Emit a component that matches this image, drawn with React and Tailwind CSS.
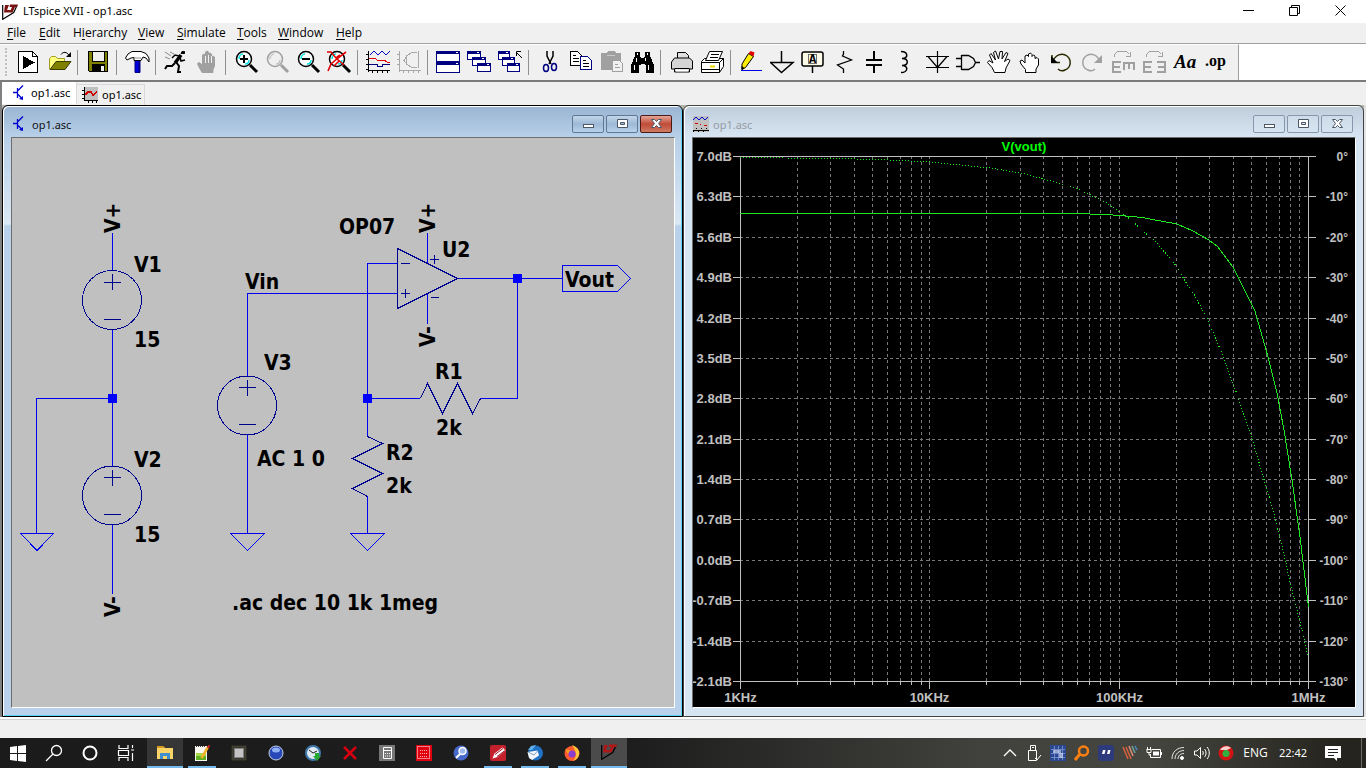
import { Fragment } from "react";

const menus = [
  { label: "File", className: "w-[32px]" },
  { label: "Edit", className: "w-[34px]" },
  { label: "Hierarchy", key: 1, className: "w-[65px]" },
  { label: "View", className: "w-[39px]" },
  { label: "Simulate", className: "w-[60px]" },
  { label: "Tools", className: "w-[41px]" },
  { label: "Window", className: "w-[58px]" },
  { label: "Help", className: "w-[34px]" },
];

/* ---------- toolbar icons, all on a 25 x 24 canvas ---------- */

function Lens({ color = "#000", glass = "#fff", shine = "#00e0e8", children }) {
  return (
    <g fill="none">
      <path d="M16 15l7 7" stroke={color} strokeWidth="3" />
      <circle cx="10" cy="9" r="7.5" fill={glass} stroke={color} strokeWidth="1.5" />
      <path d="M5 9c0-3 2-5 4-5M11 14c2 0 4-1 4-4" stroke={shine} strokeWidth="1.5" />
      {children}
    </g>
  );
}

function MiniWindow({ x, y, w = 14, h = 9 }) {
  return (
    <g shapeRendering="crispEdges">
      <rect x={x + 0.5} y={y + 0.5} width={w - 1} height={h - 1} fill="#fff" stroke="#000080" />
      <rect x={x} y={y} width={w} height="3" fill="#000080" />
      <rect x={x + w - 4} y={y + 1} width="2" height="1" fill="#fff" />
    </g>
  );
}

function OpenHand({ fill, stroke }) {
  return (
    <path
      d="M7 22.500L3.500 16 2.500 13.500 4 12.500 7.500 15V5l1.500-1 1.500 1v-3l1.500-1 1.500 1v2l1.500-1 1.500 1v3l1.500-1 1.500 1v9l-1.500 3.500v3z"
      fill={fill}
      stroke={stroke}
    />
  );
}

const icons = {
  Run: (
    <g shapeRendering="crispEdges">
      <path d="M2.500 1.500h14l5 5v16h-19z" fill="#fff" stroke="#000" />
      <path d="M16.500 1.500v5h5" fill="none" stroke="#000" />
      <path d="M7 6v13l12-6.500z" />
    </g>
  ),
  Open: (
    <g>
      <path d="M2.500 19V8.500l2-2h4l2 2h7v4" fill="#ffff80" stroke="#a09a20" />
      <path d="M3 19.500l6-8h15l-6 8z" fill="#808000" stroke="#3c3c00" />
      <path d="M14 4.500c2-3 6-3 8 1" fill="none" stroke="#000" />
      <path d="M24 2v5h-5z" />
    </g>
  ),
  Save: (
    <g shapeRendering="crispEdges">
      <path d="M2.500 1.500h19v20h-18l-1-1z" fill="#808000" stroke="#000" />
      <rect x="6.500" y="1.500" width="12" height="10" fill="#f0f0f0" stroke="#000" />
      <rect x="6" y="14" width="13" height="8" />
      <rect x="15" y="16" width="3" height="5" fill="#f0f0f0" />
    </g>
  ),
  "Control Panel": (
    <g>
      <path d="M10 10h5v12.500h-5z" fill="#0000e0" stroke="#000080" />
      <path d="M14 11v11" stroke="#000060" />
      <path d="M.5 8L3 4l4-2.500h9l5 2 3 4.500v4l-3-4-3-1-2 3.500H9V7.500L6 8l-4 2z" fill="#fff" stroke="#000" />
      <path d="M9 8h7" stroke="#909090" />
    </g>
  ),
  Simulate: (
    <g fill="none" stroke="#000">
      <path d="M18 1.500h2.500v2H17z" fill="#000" />
      <path d="M17 5l-6 8" strokeWidth="3.500" />
      <path d="M15 6l-4-1-3 3M16 7l1 4 4-1" strokeWidth="1.500" />
      <path d="M12 12l3 4-1 6h3M11 13l-3 3H3l-2 3" strokeWidth="2" />
      <path d="M1 2l6 4M1 7l5 2M6 2l4 2" stroke="#8a8a8a" />
    </g>
  ),
  Halt: (
    <g>
      <OpenHand fill="#a0a0a0" stroke="#a0a0a0" />
      <path d="M10.500 6v7M13.500 5v8M16.500 6v7" stroke="#f0f0f0" />
    </g>
  ),
  "Zoom In": (
    <Lens>
      <path d="M10 5v8M6 9h8" stroke="#000" strokeWidth="2" />
    </Lens>
  ),
  Pan: <Lens color="#a0a0a0" glass="#f0f0f0" shine="#c4c4c4" />,
  "Zoom Out": (
    <Lens>
      <path d="M6 9h8" stroke="#000" strokeWidth="2" />
    </Lens>
  ),
  "Zoom Fit": (
    <Lens>
      <path d="M0 2h4l5 6 8 7M19 2l-8 6-7 6-3 7M9 8l4-3M12 11l-5 5" stroke="#e00000" strokeWidth="1.600" />
    </Lens>
  ),
  Autorange: (
    <g fill="none" shapeRendering="crispEdges">
      <path d="M2.500 1v21M2 20.500h22" stroke="#000" />
      <path d="M0 4.500h2M0 9.500h2M0 14.500h2M0 19.500h2M6.500 21v2M11.500 21v2M16.500 21v2M21.500 21v2" stroke="#000" />
      <path d="M4 5l4-4 4 4 4-4 4 4 4-4" stroke="#0000c0" />
      <path d="M3 9l5-1 5 3 5-1 3 2h3" stroke="#e00000" />
      <path d="M3 14.500h8v2h5v-2h8" stroke="#000080" />
    </g>
  ),
  Smith: (
    <g fill="none" stroke="#a8a8a8" shapeRendering="crispEdges">
      <path d="M2.500 1v21M2 20.500h22M0 4.500h2M0 9.500h2M0 14.500h2M6.500 21v2M11.500 21v2M16.500 21v2M21.500 21v2" />
      <path d="M21.500 1v17M20 2.500h-5l-5 3-3 5 3 4 5 3h5" />
      <path d="M9.500 6v8" />
    </g>
  ),
  "Tile Windows": (
    <g shapeRendering="crispEdges">
      <MiniWindow x={0} y={1} w={24} h={11} />
      <MiniWindow x={0} y={12} w={24} h={11} />
    </g>
  ),
  Cascade: (
    <g>
      <MiniWindow x={0} y={1} />
      <MiniWindow x={5} y={7} />
      <MiniWindow x={10} y={13} />
    </g>
  ),
  "Close All": (
    <g>
      <MiniWindow x={0} y={1} w={12} />
      <MiniWindow x={4} y={7} w={13} />
      <MiniWindow x={9} y={13} w={13} />
      <path d="M24 8l-6-6M18.500 6V1.500H23" fill="none" stroke="#000" />
    </g>
  ),
  Cut: (
    <g fill="none">
      <path d="M10 1v5l4 8M16 1v5l-4 8" stroke="#000" strokeWidth="1.500" />
      <ellipse cx="9" cy="18" rx="2.500" ry="3.500" stroke="#000080" strokeWidth="1.500" />
      <ellipse cx="17" cy="17" rx="2.500" ry="3.500" stroke="#000080" strokeWidth="1.500" />
    </g>
  ),
  Copy: (
    <g shapeRendering="crispEdges">
      <path d="M2.500 1.500h7l4 4v10h-11z" fill="#fff" stroke="#000" />
      <path d="M5 5.500h3M5 8.500h6M5 11.500h6" stroke="#000" />
      <path d="M12.500 6.500h7l4 4v9h-11z" fill="#fff" stroke="#000080" />
      <path d="M15 10.500h3M15 13.500h6M15 16.500h6" stroke="#000" />
    </g>
  ),
  Paste: (
    <g shapeRendering="crispEdges">
      <path d="M2 3h5l2-2h6l2 2h5v17H2z" fill="#a0a0a0" />
      <path d="M8 5.500h8" stroke="#c8c8c8" />
      <path d="M13.500 10.500h7l3 3v8h-10z" fill="#f0f0f0" stroke="#a0a0a0" />
      <path d="M16 14.500h3M16 17.500h5" stroke="#a0a0a0" />
    </g>
  ),
  Find: (
    <g shapeRendering="crispEdges">
      <path d="M5 2h5v4l1 2h3l1-2V2h5v4l4 9v8h-8v-8h-1v-1h-4v1H9v8H1v-8l4-9z" />
      <path d="M7.500 3v2M17.500 3v2M6.500 8v4M15.500 8v3M4.500 15v5M18.500 15v5" stroke="#fff" />
    </g>
  ),
  Setup: (
    <g>
      <path d="M8.500 9V2.500h8l3 3V9" fill="#e0e0e0" stroke="#000" />
      <path d="M2.500 12l3-4h15l3 3v8h-3v3h-15v-3h-3z" fill="#d4d4d4" stroke="#000" />
      <path d="M5.500 18.500h15" stroke="#000" />
      <path d="M7 19.500h12v2H7z" fill="#fff" />
    </g>
  ),
  Print: (
    <g>
      <path d="M1.500 11.500l3-3h19v8l-4 6h-18z" fill="#fff" stroke="#000" />
      <path d="M5.500 10.500l4-9h13l-4 9z" fill="#fff" stroke="#000" />
      <path d="M11 4.500h8M10 7.500h8M1.500 12.500h18l4-4M19.500 12.500v10M1.500 19.500h18" fill="none" stroke="#000" />
      <path d="M10 16.500h5" stroke="#e8d800" strokeWidth="2" />
    </g>
  ),
  Wire: (
    <g>
      <path d="M2 20.500h21" stroke="#0000e0" shapeRendering="crispEdges" />
      <path d="M9.500 3.500l5 3-8 11-3.500 2V14z" fill="#ffee00" stroke="#000" />
      <path d="M9.500 3.500l2-2.500 4 1.500-1 4z" fill="#e00000" />
      <path d="M2.500 20v-4l3 2z" />
    </g>
  ),
  Ground: <path d="M11.500 1v11M0 12.500h23L11.500 22.500 .5 12.500" fill="none" stroke="#000" strokeWidth="1.500" />,
  "Label Net": (
    <g fill="none" stroke="#000">
      <rect x="1" y="2" width="21" height="14" rx="2" fill="#fbfbe8" strokeWidth="1.500" />
      <path d="M11.500 16v7" strokeWidth="1.500" />
      <rect x="7.500" y="4.500" width="8" height="9" stroke="#707070" />
      <text x="8" y="13" fontSize="12" fontWeight="700" fill="#000" stroke="none" fontFamily="Liberation Mono, monospace">A</text>
    </g>
  ),
  Resistor: <path d="M11.500 1v3l-1 2 9 4-14 5 6 4v4" fill="none" stroke="#000" strokeWidth="1.300" />,
  Capacitor: (
    <g shapeRendering="crispEdges">
      <path d="M3 9h16v2H3zM3 14h16v2H3zM10 1h2v8h-2zM10 16h2v7h-2z" />
    </g>
  ),
  Inductor: <path d="M7 1.500c7 0 8 7 1 7 7 0 7 7 0 7 7 0 6 7-1 7" fill="none" stroke="#000" strokeWidth="1.500" />,
  Diode: <path d="M12.500 1v22M1 6.500h23M1 17.500h23M3 6.500l9.500 11 9.500-11" fill="none" stroke="#000" strokeWidth="1.200" />,
  Component: <path d="M0 8.500h6M0 16.500h6M5.500 5v15M5.500 5.500h7l5 3 2 4-2 4-5 3h-7M19 12.500h5" fill="#ececec" stroke="#000" strokeWidth="1.300" />,
  Move: (
    <path d="M7.500 22.500L5 17.500.5 12.500 2 10.500l4 2.500L2.500 5 4 3.500 8.500 10 6.500 2.500 8.500 1l3 8L13 1.500h2.500L15 9l4-6.500 2 1-3.500 8 3.500-2.500 2 1.500-4 7.500-1 4.500z" fill="#fff" stroke="#000" />
  ),
  Drag: (
    <path d="M7.500 22.500v-3L3 14 2 11l2-1 3 3V6l2-1 1.500 1.500V4l2-1 1.500 1.500v2L15.500 5l1.500 1v2.500l2-1 1.500 1.500v6l-2.500 4v3.500z" fill="#fff" stroke="#000" />
  ),
  Undo: (
    <g fill="none" stroke="#2a2a00" strokeWidth="1.500">
      <path d="M3 5v7.500h8M3.500 12C6 5 13 2 18 6s4 12-2 14c-2 1-5 1-7-1" />
      <path d="M2 6v7h7z" fill="#000" stroke="none" />
    </g>
  ),
  Redo: (
    <g fill="none" stroke="#a0a0a0" strokeWidth="1.500">
      <path d="M20 12C18 5 11 2 6 6S2 18 8 20c2 1 5 1 7-1" />
      <path d="M22 5v8h-8z" fill="#a0a0a0" stroke="none" />
    </g>
  ),
  Rotate: (
    <g fill="none" stroke="#a0a0a0" shapeRendering="crispEdges">
      <path d="M3.500 7V4.500l3-3h9l3 3M19.500 2v4.500H15" />
      <path d="M2 11v12M2 12h8M2 17h7M2 22h8M12 13h12M13 13v7M18 13v6M23 13v7" strokeWidth="2" />
    </g>
  ),
  Mirror: (
    <g fill="none" stroke="#a0a0a0" shapeRendering="crispEdges">
      <path d="M4.500 7V4.500l3-3h9l3 3M20.500 2v4.500H16" />
      <path d="M2 11v12M2 12h8M2 17h7M2 22h8M23 11v12M23 12h-8M23 17h-7M23 22h-8" strokeWidth="2" />
    </g>
  ),
  Text: (
    <text x="1" y="18" fontSize="19" fontWeight="700" fontStyle="italic" fontFamily="Liberation Serif, serif">Aa</text>
  ),
  "SPICE Directive": (
    <text x="1" y="16" fontSize="16" fontWeight="700" fontFamily="Liberation Serif, serif">.op</text>
  ),
};

const toolbar = [
  ["Run", "Open"],
  ["Save"],
  ["Control Panel"],
  ["Simulate", "Halt"],
  ["Zoom In", "Pan", "Zoom Out", "Zoom Fit"],
  ["Autorange", "Smith"],
  ["Tile Windows", "Cascade", "Close All"],
  ["Cut", "Copy", "Paste", "Find"],
  ["Setup", "Print"],
  ["Wire", "Ground", "Label Net", "Resistor", "Capacitor", "Inductor", "Diode", "Component", "Move", "Drag", "Undo", "Redo", "Rotate", "Mirror", "Text", "SPICE Directive"],
];

function LtLogo({ dark }) {
  return (
    <svg viewBox="0 0 16 16" className="h-4 w-4">
      <path d="M.700 1v14.300l11-6.800L15 1.500" fill="none" stroke="#000" strokeWidth="1.200" />
      <path d="M3 1h4L5 6h3.500l-1 2.500H2zM8 .5h8l-1 2.500h-2l-2.500 5.500H7.500L10 3H7.500z" fill={dark ? "#b01818" : "#7a1010"} />
    </svg>
  );
}

function TransistorIcon() {
  return (
    <svg viewBox="0 0 16 16" className="h-4 w-4">
      <path d="M1 7.500h4M5.500 3v10M6 5.500l5-5M6 9.500l4 4" fill="none" stroke="#0000d0" strokeWidth="1.300" />
      <path d="M11 15v-4l-4 3z" fill="#0000d0" />
    </svg>
  );
}

function PlotIcon() {
  return (
    <svg viewBox="0 0 16 16" className="h-4 w-4" shapeRendering="crispEdges">
      <rect x="2" width="14" height="14" fill="#c0c0c0" />
      <path d="M2.500 0v14M2 13.500h14M0 3.500h2M0 7.500h2M0 11.500h2M6.500 14v2M10.500 14v2M14.500 14v2" stroke="#000" fill="none" />
      <path d="M3 8l3-3h3l2 3 4-3" stroke="#d00000" strokeWidth="1.500" fill="none" />
    </svg>
  );
}

function WaveIcon() {
  return (
    <svg viewBox="0 0 16 16" className="h-4 w-4" shapeRendering="crispEdges">
      <rect width="16" height="16" fill="#c0c0c0" />
      <path d="M0 4l3-3 3 3 3-3 3 3 3-3" stroke="#0000d0" fill="none" />
      <path d="M2 7.500h3M7 8.500h1M11 9.500h3" stroke="#d00000" />
      <path d="M0 14.500h16M0 15.500h1M5 15.500h1M10 15.500h1M3 12.500h1M8 12.500h1M13 12.500h1" stroke="#000" />
    </svg>
  );
}

/* ---------- schematic ---------- */

const labels = [
  ["V1", 134, 272], ["15", 134, 347], ["V2", 134, 467], ["15", 134, 542],
  ["V3", 264, 370], ["Vin", 245, 289], ["AC 1 0", 257, 466],
  ["OP07", 339, 234], ["U2", 442, 257], ["R1", 435, 379], ["2k", 436, 435],
  ["R2", 386, 460], ["2k", 386, 493], ["Vout", 565, 287], [".ac dec 10 1k 1meg", 232, 610],
];

const railLabels = [
  ["V+", 120, 233], ["V-", 120, 617], ["V+", 435, 233], ["V-", 435, 347],
];

function Source({ x, y }) {
  return (
    <g>
      <circle cx={x} cy={y} r="29.5" />
      <path d={`M${x - 8} ${y - 18}h17M${x + 0.5} ${y - 26}v16M${x - 8} ${y + 19}h17`} />
    </g>
  );
}

function Schematic() {
  return (
    <svg viewBox="12 138 662 569" preserveAspectRatio="xMinYMin meet" className="h-full w-full bg-[#c0c0c0]">
      <g fill="none" stroke="#0000f0" shapeRendering="crispEdges">
        <path d="M112.500 233v37M112.500 329v137M112.500 525v69M112 398.500H36.500V533" />
        <path d="M247.500 376v-82.500H397M247.500 435v98" />
        <path d="M397 263.500H367.500V436M367 398.500h53M480 398.500h37.500V278.500M457 278.500h105M367.500 496v37" />
        <path d="M427.500 233v30M427.500 293v31" />
        <path d="M562.500 265.500h55l13 13-13 13h-55z" />
        <path d="M20.500 533.500h33l-16.500 17zM230.500 533.500h34l-17 17zM350.500 533.500h34l-17 17z" />
      </g>
      <g fill="none" stroke="#000090" shapeRendering="crispEdges">
        <Source x={112} y={300} />
        <Source x={112} y={495.5} />
        <Source x={247} y={405.5} />
        <path d="M397.500 248.500v60l60-30z" />
        <path d="M401 263.500h9M401 293.500h9M405.500 289v9M430 259.500h9M434.500 255v9M431 297.500h8" />
        <path d="M420.500 398.500l7-15 15 30 15-30 15 30 8-15" />
        <path d="M367.500 436.500l15 7-30 15 30 15-30 15 15 8" />
      </g>
      <g fill="#0000ff">
        <rect x="108" y="394" width="9" height="9" />
        <rect x="363" y="394" width="9" height="9" />
        <rect x="513" y="274" width="9" height="9" />
      </g>
      <g fontFamily="'DejaVu Sans Condensed', 'Noto Sans', sans-serif" fontWeight="700" fontSize="21">
        {labels.map(([text, x, y]) => (
          <text key={`${x}-${y}`} x={x} y={y}>{text}</text>
        ))}
        {railLabels.map(([text, x, y]) => (
          <text key={`${x}-${y}`} transform={`translate(${x} ${y}) rotate(-90)`}>{text}</text>
        ))}
      </g>
    </svg>
  );
}

/* ---------- bode plot ---------- */

const gains = ["7.0dB", "6.3dB", "5.6dB", "4.9dB", "4.2dB", "3.5dB", "2.8dB", "2.1dB", "1.4dB", "0.7dB", "0.0dB", "-0.7dB", "-1.4dB", "-2.1dB"];
const decades = ["1KHz", "10KHz", "100KHz", "1MHz"];
const LEFT = 740;
const RIGHT = 1308;
const TOP = 156;
const BOTTOM = 681;

const rowY = (i) => Math.round(TOP + ((BOTTOM - TOP) * i) / 13) + 0.5;
const freqX = (decade, n) => Math.round(LEFT + ((RIGHT - LEFT) * (decade + Math.log10(n))) / 3) + 0.5;

const minorX = [0, 1, 2].flatMap((d) => [2, 3, 4, 5, 6, 7, 8, 9].map((n) => freqX(d, n)));

function Plot() {
  return (
    <svg viewBox="693 138 662 569" preserveAspectRatio="xMinYMin meet" className="h-full w-full bg-black">
      <g stroke="#787878" strokeDasharray="3 3" shapeRendering="crispEdges">
        {gains.slice(1, -1).map((g, i) => (
          <line key={g} x1={LEFT} x2={RIGHT} y1={rowY(i + 1)} y2={rowY(i + 1)} />
        ))}
        {[...minorX, freqX(1, 1), freqX(2, 1)].map((x) => (
          <line key={x} x1={x} x2={x} y1={TOP} y2={BOTTOM} />
        ))}
      </g>
      <g stroke="#c0c0c0" fill="none" shapeRendering="crispEdges">
        <rect x={LEFT + 0.5} y={TOP + 0.5} width={RIGHT - LEFT} height={BOTTOM - TOP} />
        {gains.map((g, i) => (
          <path key={g} d={`M${LEFT - 7} ${rowY(i)}h7M${RIGHT} ${rowY(i)}h8`} />
        ))}
        {minorX.map((x) => (
          <path key={x} d={`M${x} ${BOTTOM}v4`} />
        ))}
        {decades.map((d, i) => (
          <path key={d} d={`M${freqX(i, 1)} ${BOTTOM}v8`} />
        ))}
      </g>
      <g fill="none" stroke="#20e820" shapeRendering="crispEdges">
        <path d="M740 213.500H1075L1105 214.500 1120 215.500 1142 217.500 1158 220.500 1177 224 1193 231 1209 240 1218 247 1233 267 1255 311 1268 357 1277 393 1284 430 1292 480 1300 537 1308.500 607" />
        <path
          strokeDasharray="1 2"
          d="M740 157.500L830 158.500 880 159.500 930 162 990 168 1025 174 1062 184 1080 190 1105 202 1118 211 1130 219 1143 231 1157 243 1177 267 1185 281 1195 296 1208 320 1223 356 1238 397 1252 438 1260 466 1273 510 1283 550 1291 586 1302 630 1308 656"
        />
      </g>
      <g fill="#c0c0c0" fontFamily="'Liberation Sans', Arial, sans-serif" fontWeight="700" fontSize="13">
        <text x="1024" y="151" textAnchor="middle" fill="#00ff00">V(vout)</text>
        {gains.map((g, i) => (
          <text key={g} x={LEFT - 8} y={rowY(i) + 4} textAnchor="end">{g}</text>
        ))}
        {gains.map((g, i) => (
          <text key={g} x="1348" y={rowY(i) + 4} fontSize="12" textAnchor="end">{i === 0 ? "0°" : `-${i * 10}°`}</text>
        ))}
        {decades.map((d, i) => (
          <text key={d} x={freqX(i, 1)} y="702" textAnchor="middle">{d}</text>
        ))}
      </g>
    </svg>
  );
}

/* ---------- MDI child window ---------- */

function ChildButton({ name, active, children }) {
  const isClose = name === "Close";
  const look = !active
    ? "border-[#8797ad] bg-linear-to-b from-[#cfdbe8] to-[#d6e3f0]"
    : isClose
      ? "border-[#4a1a18] bg-linear-to-b from-[#e3a498] via-[#c04a38] to-[#cf7a62]"
      : "border-[#5f7896] bg-linear-to-b from-[#c3d5e8] via-[#9db9d7] to-[#b9d0e8]";
  return (
    <button aria-label={name} className={`flex h-[18px] w-8 items-center justify-center rounded-[2px] border ${look}`}>
      <svg viewBox="0 0 14 12" className="h-3 w-3.5">
        <g fill="#fff" stroke="#4c5768">{children}</g>
      </svg>
    </button>
  );
}

function ChildWindow({ title, icon, active, children }) {
  return (
    <section
      className={
        active
          ? "flex flex-col rounded-t-md border border-black bg-[linear-gradient(to_bottom,#99b4d2_0px,#b7cfe8_30px,#dbe8f5_118px,#b9d1ea_120px)] pr-[7px] pb-2 pl-2 shadow-[inset_1px_1px_0_#fff,inset_-1px_-1px_0_#5cd3f5]"
          : "flex flex-col rounded-t-md border border-[#444] bg-[linear-gradient(to_bottom,#bfcddb_0px,#d7e4f2_30px)] pr-[7px] pb-2 pl-2 shadow-[inset_1px_1px_0_#fff]"
      }
    >
      <header className="flex h-[31px] items-center gap-1 pt-[5px] pl-px">
        {icon}
        <h2 className={active ? "flex-1 pt-0.5 text-[11px] text-[#111]" : "flex-1 pt-0.5 text-[11px] text-[#959ca4]"}>{title}</h2>
        <div className="flex gap-0.5 pr-[3px]">
          <ChildButton name="Minimize" active={active}>
            <rect x="2.500" y="6.500" width="10" height="3" />
          </ChildButton>
          <ChildButton name="Maximize" active={active}>
            <path fillRule="evenodd" d="M2.500 1.500h10v8h-10zM5.500 4.500h4v2h-4z" />
          </ChildButton>
          <ChildButton name="Close" active={active}>
            <path d="M2.500 1.500h3l2 2 2-2h3l-3 4 3 4h-3l-2-2-2 2h-3l3-4z" />
          </ChildButton>
        </div>
      </header>
      <div className="min-h-0 flex-1 border border-t-[#6e6e6e] border-r-white border-b-white border-l-[#6e6e6e]">{children}</div>
    </section>
  );
}

/* ---------- taskbar ---------- */

const launchers = [
  { name: "Start", art: <path d="M0 2l7-1v7H0zM8 1l8-1v8H8zM0 9h7v7l-7-1zM8 9h8v8l-8-1z" fill="#fff" /> },
  { name: "Search", art: <g fill="none" stroke="#fff" strokeWidth="1.300"><circle cx="10.500" cy="5.500" r="5" /><path d="M7 9l-7 7" /></g> },
  { name: "Cortana", art: <circle cx="8" cy="8" r="6.500" fill="none" stroke="#fff" strokeWidth="2" /> },
  { name: "Task View", art: <path d="M1 0v3.500h9V0M1 16v-3.500h9V16M.5 5.500h10v5H.5zM14.500 0v3M14.500 8v8M13 5h3" fill="none" stroke="#fff" strokeWidth="1.200" /> },
];

const apps = [
  { name: "File Explorer", state: "active", art: <g><path d="M0 2h6l2 2h8v11H0z" fill="#f9d568" /><path d="M0 2h6l2 2H0z" fill="#d79a1c" /><path d="M3 15V9h10v6h-3v-3H6v3z" fill="#3f8fd0" /></g> },
  { name: "Notepad++", state: "running", art: <g><rect x="1" y="1" width="12" height="15" fill="#f8f8f0" /><path d="M2 8h10v7H2z" fill="#a4d84a" /><path d="M2 11h10v4H2z" fill="#5fb020" /><path d="M2 1.500h10" stroke="#444" strokeDasharray="1 1" /><path d="M14 2L7.500 13" stroke="#f0b030" strokeWidth="2.500" /><path d="M15.500 0l-1.500 3" stroke="#c02020" strokeWidth="2" /></g> },
  { name: "Chip", art: <g><rect x="1" y="1" width="14" height="14" fill="#3a3934" stroke="#5a5330" strokeWidth=".5" /><rect x="3" y="3" width="10" height="10" fill="#808080" /><rect x="4" y="4" width="8" height="8" fill="#c4c4c4" /></g> },
  { name: "Orb", art: <g><circle cx="8" cy="8" r="7" fill="#2848b8" stroke="#c8d4e8" /><ellipse cx="8" cy="5" rx="4" ry="2.500" fill="#90b0f4" /></g> },
  { name: "Backup", art: <g><circle cx="8" cy="8" r="7" fill="#dfe9f2" stroke="#3f79ac" strokeWidth="2" /><path d="M4 5l4 3 4-2" stroke="#222" fill="none" /><path d="M10 8h4v3h2l-4 5-4-5h2z" fill="#25a832" /></g> },
  { name: "Closer", art: <path d="M2 2l12 12M14 2L2 14" stroke="#d80010" strokeWidth="2.500" /> },
  { name: "Calculator", art: <g><rect width="16" height="16" fill="#777" /><path d="M4.500 2.500h8v11h-8zM5 5.500h7" fill="none" stroke="#fff" /><path d="M6 8.500h6M6 11h6" stroke="#fff" strokeDasharray="1 1" /></g> },
  { name: "Red grid", art: <g><rect width="16" height="16" fill="#e00010" /><rect x="1.500" y="1.500" width="12" height="12" fill="none" stroke="#fff" strokeDasharray="1 1" /><path d="M4 5.500h8M4 8.500h8M4 11.500h8" stroke="#f8b0b0" strokeDasharray="1 1" /></g> },
  { name: "Finder", art: <g><circle cx="8" cy="8" r="7.500" fill="#4668c8" /><circle cx="9.500" cy="6" r="3.500" fill="#9db8f0" stroke="#fff" strokeWidth="1.500" /><path d="M7 9l-4 4" stroke="#fff" strokeWidth="2" /></g> },
  { name: "Editor", state: "running", art: <g><rect width="16" height="16" rx="2" fill="#c4202c" /><path d="M2.500 13.500l2-5 8-6 3 3-8 6.500z" fill="#fff" /><path d="M5 9.500l8-6M7 11.500l8-6" stroke="#a01020" /></g> },
  { name: "Thunderbird", state: "running", art: <g><circle cx="8.500" cy="8" r="7.500" fill="#1f72c4" /><path d="M1 5l3-4 5-1-4 5z" fill="#5fb0ec" /><path d="M.5 7l10-1.500 1.500 5-7 4.500-3-2z" fill="#f4f8fc" /><path d="M1 7l6 3 3.500-4" fill="none" stroke="#7fa0c0" /></g> },
  { name: "Firefox", state: "running", art: <g><circle cx="8" cy="8.500" r="7.500" fill="#ff5a30" /><path d="M8 0c5 2 8 5 7 10-1 3-3 5-6 6 4-4 4-9-1-16z" fill="#ffc83a" /><path d="M1 4l3 1 4 1-4 3z" fill="#ffa020" /><circle cx="8" cy="9" r="3.500" fill="#8a3fd0" /></g> },
  { name: "LTspice", state: "active" },
];

const tray = [
  { name: "Show hidden icons", art: <path d="M2 11l6-6 6 6" fill="none" stroke="#fff" strokeWidth="1.300" /> },
  { name: "USB", art: <g fill="none" stroke="#fff"><path d="M4.500 5V.5h5V5M2.500 5.500h8v10h-8zM6 2.500h2" /><path d="M9 13l2 2 4-5" /></g> },
  { name: "Monitor", art: <g><rect width="16" height="16" fill="#2c4890" /><path d="M1 4.500h14M1 8.500h14M1 12.500h14M4.500 1v14M8.500 1v14M12.500 1v14" stroke="#6f88c8" /><path d="M3 5h8v3H3zM9 8h4v5H9z" fill="#e0e8fc" opacity=".6" /></g> },
  { name: "Everything", art: <g fill="none" stroke="#ff8010"><circle cx="9.500" cy="6" r="4.500" strokeWidth="2.500" /><path d="M6 9l-5 6" strokeWidth="3" /></g> },
  { name: "Quotes", art: <g><rect width="16" height="16" rx="3" fill="#2d3a7c" /><path d="M5 5h2.500L6.500 9H4zM10 5h2.500l-1 4H9z" fill="#fff" /></g> },
  { name: "Stripes", art: <g fill="none" strokeWidth="1.500"><path d="M1 2l5 12M4 2l5 12" stroke="#d8603c" /><path d="M7 1l4 10" stroke="#e09078" /><path d="M10 1l3 7" stroke="#6fa898" /><path d="M13 1l2 4" stroke="#4c88c0" /></g> },
  { name: "Battery", art: <g fill="none" stroke="#fff"><path d="M6 4.500h8.500v8h-10V9M15.500 7v3M.5 4.500h5M1.500 2v2M4.500 2v2M1 4.500v3h4v-3M3 8v2h2" /><path d="M7 6.500h6v4H7z" fill="#fff" stroke="none" /></g> },
  { name: "Network", art: <g fill="none" stroke="#fff"><path d="M2 14C2 7 7 2.500 14 2.500M5 14c0-5 4-8.500 9-8.500M8 14c0-3 2-5.500 6-5.500" opacity=".85" /><circle cx="12" cy="13" r="1.500" fill="#fff" /></g> },
  { name: "Volume", art: <g fill="none" stroke="#fff"><path d="M.5 6h2.500l3.500-3.500v11L3 10H.5z" /><path d="M8.500 6c1 1 1 3 0 4M10.500 4c2 2 2 6 0 8M13 2c3 3 3 9 0 12" /></g> },
  { name: "Recorder", art: <g><circle cx="8" cy="8" r="7.500" fill="#d01414" /><path d="M2 5c2-4 8-5 11-2L9 5z" fill="#f8d0d0" /><circle cx="8" cy="8.500" r="3.500" fill="#30b040" /></g> },
];

function AppButton({ app }) {
  const box = app.state === "active"
    ? app.name === "LTspice"
      ? "bg-[#4b4b4b] border-b-2 border-[#76b9ed]"
      : "bg-[#363636] border-b-2 border-[#76b9ed]"
    : "";
  return (
    <button aria-label={app.name} className={`relative mr-px flex w-9 items-center justify-center ${box}`}>
      {app.art ? (
        <svg viewBox="0 0 16 16" className="h-4 w-4">{app.art}</svg>
      ) : (
        <LtLogo dark />
      )}
      {app.state === "running" && <span className="absolute bottom-0 left-1 h-0.5 w-7 bg-[#76b9ed]" />}
    </button>
  );
}

function Taskbar() {
  return (
    <footer className="flex h-[30px] bg-[linear-gradient(to_right,#1b1b1b_0%,#1e1e1e_47%,#41413d_72%,#464641_84%,#25241f_98%)] text-white">
      <div className="flex">
        {launchers.map((item) => (
          <button key={item.name} aria-label={item.name} className="flex w-9 items-center justify-center">
            <svg viewBox="0 0 16 16" className="h-4 w-4 overflow-visible">{item.art}</svg>
          </button>
        ))}
      </div>
      <div className="ml-[3px] flex flex-1">
        {apps.map((app) => (
          <AppButton key={app.name} app={app} />
        ))}
      </div>
      <div className="flex">
        {tray.map((item) => (
          <button key={item.name} aria-label={item.name} className="flex w-6 items-center justify-center">
            <svg viewBox="0 0 16 16" className="h-4 w-4">{item.art}</svg>
          </button>
        ))}
        <button className="w-[35px] text-center font-['Open_Sans',sans-serif] text-[12px]">ENG</button>
        <button className="w-10 text-center text-[11px]">22:42</button>
        <button aria-label="Notifications" className="flex w-10 items-center justify-center">
          <svg viewBox="0 0 16 16" className="h-4 w-4">
            <path d="M0 1h16v12h-4v3l-3-3H0z" fill="#fff" />
            <path d="M3 4.500h10M3 7.500h10M3 10.500h6" stroke="#222" />
          </svg>
        </button>
        <div className="ml-2 w-[5px] border-l border-[#6a6a66]" />
      </div>
    </footer>
  );
}

export default function App() {
  return (
    <div className="flex min-h-screen flex-col bg-[#f0f0f0] font-['Noto_Sans',sans-serif] text-[12px] text-black">
      <header className="flex h-[23px] items-center bg-white pl-0.5">
        <LtLogo />
        <h1 className="flex-1 pl-[5px] text-[11px]">LTspice XVII - op1.asc</h1>
        <div className="flex self-stretch pr-[3px] pb-0.5">
          <button aria-label="Minimize" className="flex w-[46px] items-center justify-center">
            <svg viewBox="0 0 11 11" className="h-[11px] w-[11px]"><path d="M0 5.500h11" stroke="#000" /></svg>
          </button>
          <button aria-label="Restore" className="flex w-[46px] items-center justify-center">
            <svg viewBox="0 0 11 11" className="h-[11px] w-[11px]"><path d="M.5 2.500h8v8h-8zM2.500 2V.5h8v8H9" fill="none" stroke="#000" /></svg>
          </button>
          <button aria-label="Close" className="flex w-[46px] items-center justify-center">
            <svg viewBox="0 0 11 11" className="h-[11px] w-[11px]"><path d="M.5.5l10 10M10.500.5l-10 10" stroke="#000" /></svg>
          </button>
        </div>
      </header>

      <nav className="flex h-[21px] items-center border-b border-[#a0a0a0] pl-[7px] font-['Open_Sans',sans-serif]">
        {menus.map(({ label, key = 0, className }) => (
          <button key={label} className={`text-left ${className}`}>
            {label.slice(0, key)}
            <span className="underline underline-offset-2">{label[key]}</span>
            {label.slice(key + 1)}
          </button>
        ))}
      </nav>

      <div className="flex h-[38px] border-b-2 border-[#7a7a7a] bg-white">
        <div className="flex items-center border-t border-r border-t-white border-r-[#a0a0a0] bg-[#f0f0f0] pr-1.5 pb-px pl-[5px]">
          <div className="mr-[5px] h-7 border-l-2 border-dotted border-[#c0c0c0]" />
          <div className="w-px" />
          {toolbar.map((group, i) => (
            <Fragment key={group[0]}>
              {i > 0 && <div className="mr-[5px] ml-0.5 h-[25px] w-px bg-[#909090]" />}
              {group.map((name) => (
                <button key={name} aria-label={name} className="flex w-[31px] justify-center">
                  <svg viewBox="0 0 25 24" className="h-6 w-[25px]">{icons[name]}</svg>
                </button>
              ))}
            </Fragment>
          ))}
        </div>
      </div>

      <div className="flex h-[23px] items-start border-l-2 border-[#808080]">
        <button className="flex h-[22px] w-[75px] items-center gap-[3px] border-r border-[#d9d9d9] bg-white pl-2.5 text-[11px]">
          <TransistorIcon />
          op1.asc
        </button>
        <button className="mt-0.5 flex h-[21px] w-[68px] items-center gap-1 border-t border-r border-[#d9d9d9] pl-[5px] text-[11px]">
          <PlotIcon />
          op1.asc
        </button>
      </div>

      <main className="grid flex-1 grid-cols-2 border-r-2 border-l-2 border-r-[#e3e3e3] border-l-[#808080] bg-[#b4b4a8]">
        <ChildWindow title="op1.asc" icon={<TransistorIcon />} active>
          <Schematic />
        </ChildWindow>
        <ChildWindow title="op1.asc" icon={<WaveIcon />}>
          <Plot />
        </ChildWindow>
      </main>

      <div className="h-[21px] border-t-2 border-white">
        <div className="border-t border-[#d0d0d0]" />
      </div>

      <Taskbar />
    </div>
  );
}
